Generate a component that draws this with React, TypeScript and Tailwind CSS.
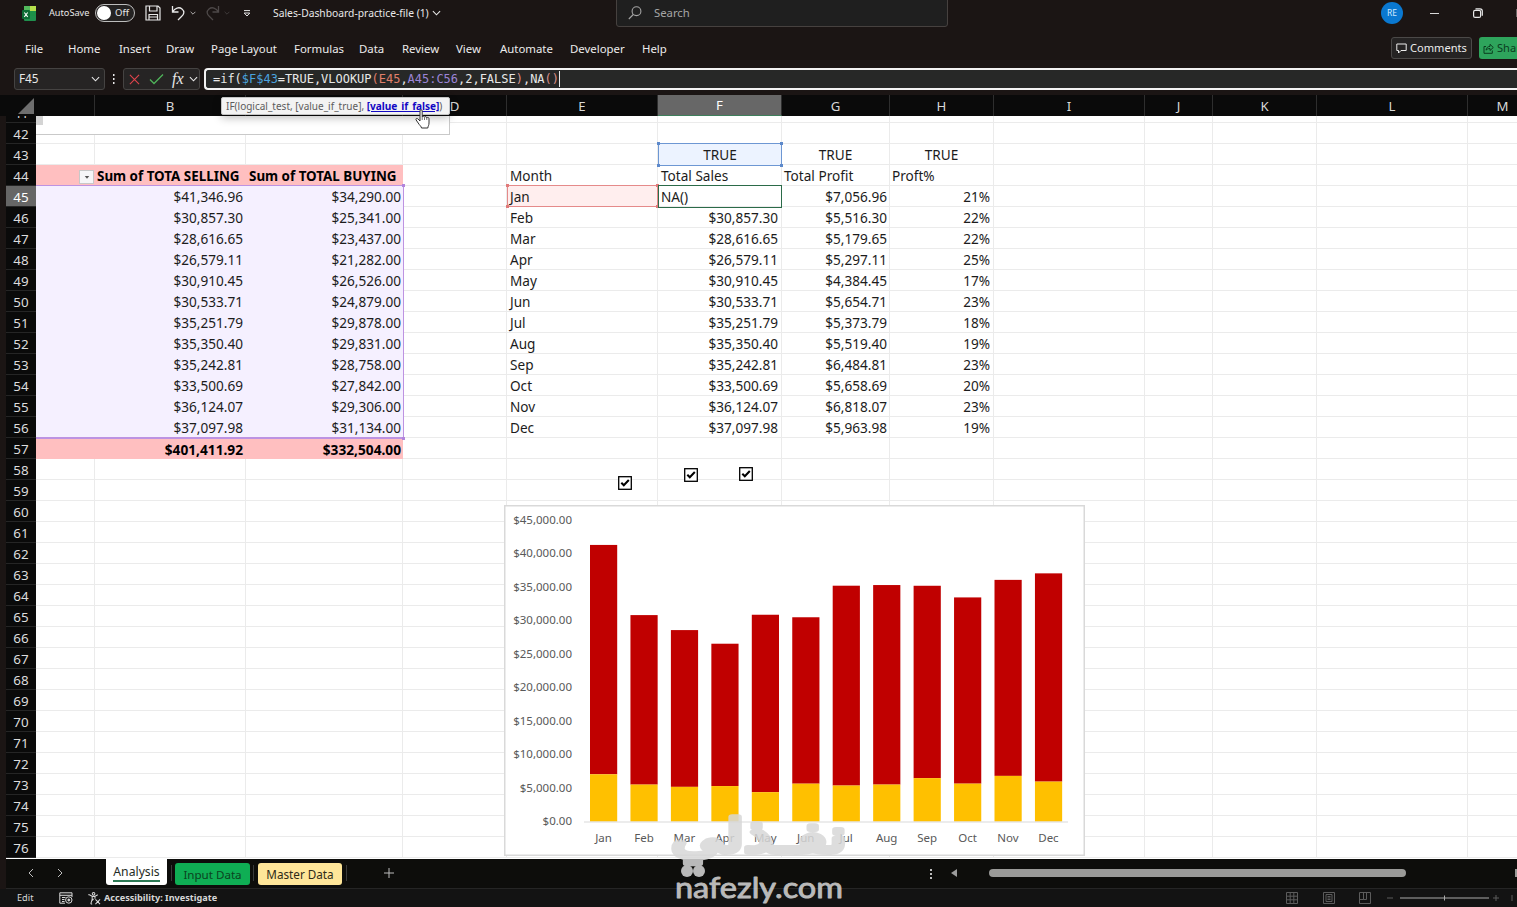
import type { ReactNode } from "react";
import clsx from "clsx";

const MENU = [
  { label: "File", width: "w-[43px]" },
  { label: "Home", width: "w-[51px]" },
  { label: "Insert", width: "w-[47px]" },
  { label: "Draw", width: "w-[45px]" },
  { label: "Page Layout", width: "w-[83px]" },
  { label: "Formulas", width: "w-[65px]" },
  { label: "Data", width: "w-[43px]" },
  { label: "Review", width: "w-[54px]" },
  { label: "View", width: "w-[44px]" },
  { label: "Automate", width: "w-[70px]" },
  { label: "Developer", width: "w-[72px]" },
  { label: "Help", width: "w-[40px]" },
];

const COLUMNS = [
  { id: "A", width: "w-[59px]" },
  { id: "B", width: "w-[151px]" },
  { id: "C", width: "w-[157px]" },
  { id: "D", width: "w-[104px]" },
  { id: "E", width: "w-[151px]" },
  { id: "F", width: "w-[124px]" },
  { id: "G", width: "w-[108px]" },
  { id: "H", width: "w-[104px]" },
  { id: "I", width: "w-[151px]" },
  { id: "J", width: "w-[68px]" },
  { id: "K", width: "w-[104px]" },
  { id: "L", width: "w-[151px]" },
  { id: "M", width: "w-[70px]" },
];

const DATA = [
  { month: "Jan", selling: 41346.96, buying: 34290, profit: 7056.96, pct: 21 },
  { month: "Feb", selling: 30857.3, buying: 25341, profit: 5516.3, pct: 22 },
  { month: "Mar", selling: 28616.65, buying: 23437, profit: 5179.65, pct: 22 },
  { month: "Apr", selling: 26579.11, buying: 21282, profit: 5297.11, pct: 25 },
  { month: "May", selling: 30910.45, buying: 26526, profit: 4384.45, pct: 17 },
  { month: "Jun", selling: 30533.71, buying: 24879, profit: 5654.71, pct: 23 },
  { month: "Jul", selling: 35251.79, buying: 29878, profit: 5373.79, pct: 18 },
  { month: "Aug", selling: 35350.4, buying: 29831, profit: 5519.4, pct: 19 },
  { month: "Sep", selling: 35242.81, buying: 28758, profit: 6484.81, pct: 23 },
  { month: "Oct", selling: 33500.69, buying: 27842, profit: 5658.69, pct: 20 },
  { month: "Nov", selling: 36124.07, buying: 29306, profit: 6818.07, pct: 23 },
  { month: "Dec", selling: 37097.98, buying: 31134, profit: 5963.98, pct: 19 },
];

const ROWS = Array.from({ length: 36 }, (_, i) => 41 + i);

const money = (n: number) =>
  "$" + n.toLocaleString("en-US", { minimumFractionDigits: 2, maximumFractionDigits: 2 });

function cellText(row: number, col: string): string {
  // F43 and E45 are drawn by the range highlights on top of the grid
  if (row === 43 && "GH".includes(col)) return "TRUE";
  if (row === 44) {
    const heads: Record<string, string> = {
      B: "Sum of TOTA SELLING",
      C: "Sum of TOTAL BUYING",
      E: "Month",
      F: "Total Sales",
      G: "Total Profit",
      H: "Proft%",
    };
    return heads[col] ?? "";
  }
  if (row >= 45 && row <= 56) {
    const d = DATA[row - 45];
    if (col === "B") return money(d.selling);
    if (col === "C") return money(d.buying);
    if (col === "E") return row === 45 ? "" : d.month;
    if (col === "F") return row === 45 ? "NA()" : money(d.selling);
    if (col === "G") return money(d.profit);
    if (col === "H") return d.pct + "%";
  }
  if (row === 57 && col === "B") return "$401,411.92";
  if (row === 57 && col === "C") return "$332,504.00";
  return "";
}

function Cell({ row, col, width }: { row: number; col: string; width: string }) {
  const pivot = "ABC".includes(col);
  const band = pivot && (row === 44 || row === 57);
  const range = pivot && row >= 45 && row <= 56;
  const left = row === 44 || col === "E" || (row === 45 && col === "F");
  return (
    <div
      className={clsx(
        "flex h-full shrink-0 items-center overflow-hidden border-r border-b whitespace-nowrap",
        width,
        band && "border-[#ffbfc0] bg-[#ffbfc0] font-bold text-black",
        band && (row === 44 ? "text-[13.4px]" : "text-[13.7px]"),
        range && "border-[#f5f0ff] bg-[#f5f0ff]",
        !band && !range && "border-[#ebebeb] bg-white",
        row === 43 ? "justify-center" : left ? "justify-start" : "justify-end",
        row !== 43 && left && (col === "E" || col === "F" || col === "C" ? "pl-[3px]" : "pl-[2px]"),
        row !== 43 && !left && (col === "C" ? "pr-px" : col === "F" || col === "H" ? "pr-[3px]" : "pr-[2px]"),
      )}
    >
      <span className={band ? "translate-y-[1.5px]" : "translate-y-px"}>{cellText(row, col)}</span>
    </div>
  );
}

function Chevron({ className }: { className?: string }) {
  return (
    <svg viewBox="0 0 10 6" className={clsx("shrink-0", className)} fill="none" stroke="currentColor" strokeWidth="1.2">
      <path d="M1 1l4 4 4-4" />
    </svg>
  );
}

function TitleBar() {
  return (
    <div className="flex h-[28px] shrink-0 items-center pb-[2px] text-[#e8e8e8]">
      <svg viewBox="0 0 14 15" className="ml-[22px] h-[15px] w-[14px] shrink-0">
        <rect x="2" y="0" width="12" height="15" rx="1" fill="#1f8f4d" />
        <rect x="2" y="0" width="6" height="5" fill="#52b95c" />
        <rect x="8" y="0" width="6" height="5" fill="#b6e04c" />
        <rect x="8" y="5" width="6" height="5" fill="#1c9048" />
        <rect x="0" y="4" width="8" height="9" rx="1" fill="#0e6b35" />
        <path d="M2.3 6.5l3.4 4.4M5.7 6.5L2.3 10.9" stroke="#fff" strokeWidth="1.1" />
      </svg>
      <span className="ml-[13px] w-[46px] shrink-0 text-[9.2px] whitespace-nowrap">AutoSave</span>
      <div className="flex h-[18px] w-[40px] shrink-0 items-center rounded-full border border-[#bdbdbd] bg-[#242222] pl-[1px]">
        <div className="h-[14px] w-[14px] shrink-0 rounded-full bg-white" />
        <span className="ml-[4px] text-[9.5px]">Off</span>
      </div>
      <svg viewBox="0 0 16 16" className="ml-[10px] h-4 w-4 shrink-0" fill="none" stroke="currentColor" strokeWidth="1.2">
        <path d="M1 1h12l2 2v12H1zM4.5 1v5H12V1M4 15V9.5h8.500V15M4 12h8.500" />
      </svg>
      <svg viewBox="0 0 14 16" className="ml-[10px] h-4 w-[14px] shrink-0" fill="none" stroke="currentColor" strokeWidth="1.3">
        <path d="M1.500 1v6h6M1.500 7C4 3 8 1.500 11 4s2 5.500-.5 7.500L7 15" />
      </svg>
      <Chevron className="ml-[5px] h-[4px] w-[6px]" />
      <svg viewBox="0 0 14 16" className="ml-[10px] h-4 w-[14px] shrink-0 text-[#4d4848]" fill="none" stroke="currentColor" strokeWidth="1.3">
        <path d="M12.500 1v6h-6M12.500 7C10 3 6 1.500 3 4s-2 5.500.5 7.500L7 15" />
      </svg>
      <Chevron className="ml-[4px] h-[4px] w-[6px] text-[#4d4848]" />
      <svg viewBox="0 0 8 7" className="ml-[13px] h-[7px] w-[8px] shrink-0" fill="none" stroke="currentColor">
        <path d="M1 .6h6M1.200 3h5.600L4 6z" />
      </svg>
      <span className="ml-[22px] w-[159px] shrink-0 text-[10.3px] whitespace-nowrap">
        Sales-Dashboard-practice-file (1)
      </span>
      <Chevron className="h-[6px] w-[9px]" />
      <div className="-mt-[4px] ml-[175px] flex h-[32px] w-[332px] shrink-0 items-center rounded-[3px] border border-[#46413f] bg-[#1f1f1f] pt-[4px] pl-[11px] text-[#a5a5a5]">
        <svg viewBox="0 0 14 14" className="h-[14px] w-[14px]" fill="none" stroke="currentColor" strokeWidth="1.1">
          <circle cx="8.500" cy="5.200" r="4.400" />
          <path d="M5.300 8.500L.8 13" />
        </svg>
        <span className="ml-[12px] text-[11.3px]">Search</span>
      </div>
      <div className="ml-[433px] flex h-[22px] w-[22px] shrink-0 items-center justify-center rounded-full bg-[#0a78d0] text-[8.5px] text-[#cfe8ff]">
        RE
      </div>
      <div className="ml-[27px] h-px w-[9px] shrink-0 bg-[#d8d8d8]" />
      <svg viewBox="0 0 10 10" className="ml-[34px] h-[10px] w-[10px] shrink-0" fill="none" stroke="currentColor" strokeWidth="1.2">
        <rect x=".6" y="2.4" width="7" height="7" rx="1.5" />
        <path d="M2.500.8H7a2.300 2.300 0 0 1 2.300 2.300v4.600" />
      </svg>
      <div className="ml-[33px] h-[8px] w-px shrink-0 bg-[#6a6666]" />
    </div>
  );
}

function MenuBar() {
  return (
    <div className="flex h-[40px] shrink-0 items-center overflow-hidden pt-px pl-[25px] text-[11.4px] text-[#ececec]">
      {MENU.map((m) => (
        <span key={m.label} className={clsx("shrink-0 whitespace-nowrap", m.width)}>
          {m.label}
        </span>
      ))}
      <div className="-mt-px ml-[709px] flex h-[22px] w-[81px] shrink-0 items-center rounded-[3px] border border-[#4b4948] bg-[#252323] pl-[4px]">
        <svg viewBox="0 0 11 11" className="h-[11px] w-[11px] shrink-0" fill="none" stroke="currentColor">
          <path d="M.8 1h9.400v6.500H5L2.500 10V7.500H.8z" />
        </svg>
        <span className="ml-[3px] text-[11.1px]">Comments</span>
      </div>
      <div className="-mt-px ml-[7px] flex h-[22px] w-[60px] shrink-0 items-center rounded-[3px] bg-[#2ea45c] pl-[4px] text-[#0b3d1f]">
        <svg viewBox="0 0 11 11" className="h-[11px] w-[11px] shrink-0" fill="none" stroke="currentColor">
          <path d="M3 3.500H1v6.800h8.300V7.500M3 7.200C3.400 4.500 5 3.400 7 3.400V1.300l3.300 3.200L7 7.500V5.500C5.300 5.500 4 6 3 7.200z" />
        </svg>
        <span className="ml-[3px] text-[11.1px]">Share</span>
      </div>
    </div>
  );
}

function FormulaBar() {
  return (
    <div className="flex h-[27px] shrink-0 items-start text-[#e8e8e8]">
      <div className="ml-[14px] flex h-[22px] w-[91px] shrink-0 items-center justify-between rounded-[3px] border border-[#454342] bg-[#262424] pr-[4px] pl-[4px] text-[11.8px]">
        F45
        <Chevron className="h-[6px] w-[9px]" />
      </div>
      <svg viewBox="0 0 4 12" className="mt-[5px] ml-[7px] h-[12px] w-[4px] shrink-0" fill="currentColor">
        <rect x="1" y="1" width="1.500" height="2" />
        <rect x="1" y="5" width="1.500" height="2" />
        <rect x="1" y="9" width="1.500" height="2" />
      </svg>
      <div className="ml-[7px] flex h-[22px] w-[77px] shrink-0 items-center rounded-[3px] border border-[#454342] bg-[#262424] pl-[5px]">
        <svg viewBox="0 0 12 12" className="h-[11px] w-[11px] shrink-0" stroke="#e0444c" strokeWidth="1.2">
          <path d="M1 1l10 10M11 1L1 11" />
        </svg>
        <svg viewBox="0 0 15 12" className="ml-[9px] h-[12px] w-[15px] shrink-0" fill="none" stroke="#4fb35a" strokeWidth="1.3">
          <path d="M1 6.500L5 10.500 14 1.500" />
        </svg>
        <span className="ml-[8px] font-['Liberation_Serif',serif] text-[16px] italic">fx</span>
        <Chevron className="ml-[5px] h-[6px] w-[9px]" />
      </div>
      <div className="ml-[4px] flex h-[22px] flex-1 items-center rounded-l-[4px] border-y-2 border-l-2 border-[#f2f2f2] bg-[#272827] pl-[7px] font-['DejaVu_Sans_Mono',monospace] text-[11.97px] whitespace-pre">
        <div className="flex translate-y-px">
          <span>=if(</span>
          <span className="text-[#4aa3df]">$F$43</span>
          <span>=TRUE,VLOOKUP</span>
          <span className="text-[#e07f6a]">(E45</span>
          <span>,</span>
          <span className="text-[#9b84d6]">A45:C56</span>
          <span>,2,FALSE</span>
          <span className="text-[#d98f88]">)</span>
          <span>,NA</span>
          <span className="text-[#d98f88]">()</span>
        </div>
        <div className="h-[16px] w-px bg-[#e8e8e8]" />
      </div>
    </div>
  );
}

function ColumnHeaders() {
  return (
    <div className="flex h-[21px] shrink-0 overflow-hidden bg-[#0a0a0a] pl-[6px] text-[13.2px] text-[#d8d8d8]">
      <div className="flex w-[30px] shrink-0 items-end justify-end pr-[2px] pb-[2px]">
        <svg viewBox="0 0 16 16" className="h-[16px] w-[16px]">
          <path d="M16 0v16H0z" fill="#6e6e6e" />
        </svg>
      </div>
      {COLUMNS.map((c) => (
        <div
          key={c.id}
          className={clsx(
            "flex shrink-0 items-center justify-center border-r border-[#2e2e2e] pt-[2px]",
            c.width,
            c.id === "F" && "border-b border-b-[#3f7f5c] bg-[#676767] text-white",
          )}
        >
          {c.id === "A" || c.id === "C" ? "" : c.id}
        </div>
      ))}
    </div>
  );
}

function Handles({ color }: { color: string }) {
  return (
    <>
      <i className={clsx("absolute -top-[2px] -left-[2px] h-[3px] w-[3px]", color)} />
      <i className={clsx("absolute -top-[2px] -right-[2px] h-[3px] w-[3px]", color)} />
      <i className={clsx("absolute -bottom-[2px] -left-[2px] h-[3px] w-[3px]", color)} />
      <i className={clsx("absolute -right-[2px] -bottom-[2px] h-[3px] w-[3px]", color)} />
    </>
  );
}

function Checkbox({ place }: { place: string }) {
  return (
    <svg viewBox="0 0 14 14" className={clsx("absolute h-[14px] w-[14px]", place)}>
      <rect x=".7" y=".7" width="12.600" height="12.600" fill="#fff" stroke="#000" strokeWidth="1.3" />
      <path d="M3.300 6.800l2.500 2.500 5-5.300" fill="none" stroke="#000" strokeWidth="2" />
    </svg>
  );
}

function Chart() {
  const base = 316.5;
  const y = (v: number) => base - (v / 45000) * 301;
  return (
    <svg
      viewBox="0 0 581 351"
      className="absolute top-[389px] left-[498px] h-[351px] w-[581px] font-['Noto_Sans',sans-serif]"
      fontSize="11.5"
      fill="#595959"
    >
      <rect x=".75" y=".75" width="579.5" height="349.5" fill="#fff" stroke="#d9d9d9" strokeWidth="1.5" />
      {Array.from({ length: 10 }, (_, i) => (
        <text key={i} x="68" y={y(i * 5000) + 3.5} textAnchor="end">
          {money(i * 5000)}
        </text>
      ))}
      {DATA.map((d, i) => {
        const x = 86 + i * 40.45;
        return (
          <g key={d.month}>
            <rect x={x} y={y(d.selling)} width="27.2" height={y(d.profit) - y(d.selling)} fill="#c00000" />
            <rect x={x} y={y(d.profit)} width="27.2" height={base - y(d.profit)} fill="#ffc000" />
            <text x={x + 13.5} y="337" textAnchor="middle">
              {d.month}
            </text>
          </g>
        );
      })}
      <path d="M80 317h484" stroke="#d9d9d9" strokeWidth="1.2" />
    </svg>
  );
}

function FunctionHint() {
  return (
    <>
      <div className="absolute top-0 left-[30px] h-[19px] w-[414px] border-r border-b border-[#c9c9c9] bg-white">
        <div className="h-[9px] w-[7px] bg-[#d4d4d4]" />
      </div>
      <div className="absolute -top-[19px] left-[215px] flex h-[18px] w-[229px] items-center rounded-[2px] border border-[#c4c4c4] bg-[#f3f3f3] pl-[4px] text-[10px] whitespace-nowrap text-[#5c5c5c] shadow-[0_3px_8px_rgba(0,0,0,0.25)]">
        IF(logical_test, [value_if_true],&nbsp;
        <b className="text-[10.1px] tracking-[-0.05px] text-[#1208c4] underline">[value_if_false]</b>)
      </div>
      <svg viewBox="0 0 16 20" className="absolute -top-[7px] left-[409px] h-[20px] w-[16px]" fill="#fff" stroke="#333" strokeLinejoin="round">
        <path d="M5 1.800c0-1.400 2-1.400 2.200 0V8c.3-1.200 2.300-1 2.300.3.400-1 2.200-.8 2.300.6.600-.9 2.200-.5 2.200.8v4.300c0 2.500-1 3-1.200 5H6.500c0-1.500-2-2.700-3.300-5L1 10.800c-.5-1.300 1-1.900 1.800-1L5 12z" />
        <path d="M7.200 8v3M9.500 8.500V11M11.800 9v2" strokeWidth=".7" />
      </svg>
    </>
  );
}

function Sheet() {
  return (
    <div className="relative ml-[6px] flex h-[743px] shrink-0 flex-col bg-white text-[13.6px] text-[#1c1c1c]">
      {ROWS.map((r) => (
        <div key={r} className={clsx("flex shrink-0 overflow-hidden", r === 41 ? "h-[7px] items-end" : "h-[21px]")}>
          <div
            className={clsx(
              "flex h-[21px] w-[30px] shrink-0 items-center justify-center border-b border-[#252525] pt-[3px] text-[13.4px]",
              r === 45 ? "bg-[#666] text-white" : "bg-[#0a0a0a] text-[#dcdcdc]",
            )}
          >
            {r}
          </div>
          {COLUMNS.map((c) => (
            <Cell key={c.id} row={r} col={c.id} width={c.width} />
          ))}
        </div>
      ))}

      <div className="absolute top-[69px] left-[30px] h-[254px] w-[368px] border-t border-r border-b-2 border-[#bd93e2]">
        <i className="absolute -top-[2px] -right-[2px] h-[3px] w-[3px] bg-[#b184dc]" />
        <i className="absolute -right-[2px] -bottom-[3px] h-[3px] w-[3px] bg-[#b184dc]" />
      </div>
      <div className="absolute top-[54px] left-[73px] flex h-[14px] w-[15px] items-center justify-center border border-[#c8c8c8] bg-[#f6f6f8]">
        <svg viewBox="0 0 6 4" className="h-[3px] w-[6px]">
          <path d="M0 0h6L3 3.500z" fill="#555" />
        </svg>
      </div>
      <div className="absolute top-[27px] left-[652px] flex h-[23px] w-[124px] items-center justify-center border border-[#6d97d3] bg-[#ecf3ff]">
        <span>TRUE</span>
        <Handles color="bg-[#5d89cb]" />
      </div>
      <div className="absolute top-[69px] left-[501px] flex h-[22px] w-[151px] items-center border border-[#e58a8a] bg-[#ffeeee] pl-[2px]">
        <span className="translate-y-px">Jan</span>
        <Handles color="bg-[#e07a7a]" />
      </div>
      <div className="absolute top-[69px] left-[652px] h-[23px] w-[124px] border border-[#2b6b49]" />

      <Checkbox place="top-[360px] left-[612px]" />
      <Checkbox place="top-[352px] left-[678px]" />
      <Checkbox place="top-[351px] left-[733px]" />
      <Chart />
      <FunctionHint />
    </div>
  );
}

function Divider() {
  return <div className="mt-[6px] h-[16px] w-px shrink-0 bg-[#3a3a3a]" />;
}

function SheetTabs() {
  return (
    <div className="ml-[6px] flex h-[30px] shrink-0 items-start overflow-hidden border-b border-[#252525] bg-[#0d0d0b] text-[12.4px] text-[#bdbdbd]">
      <svg viewBox="0 0 6 10" className="mt-[9px] ml-[22px] h-[10px] w-[6px] shrink-0" fill="none" stroke="currentColor">
        <path d="M5 1L1 5l4 4" />
      </svg>
      <svg viewBox="0 0 6 10" className="mt-[9px] ml-[23px] h-[10px] w-[6px] shrink-0" fill="none" stroke="currentColor">
        <path d="M1 1l4 4-4 4" />
      </svg>
      <div className="ml-[43px] flex h-[26px] w-[61px] shrink-0 justify-center rounded-b-[3px] bg-white text-[#1f2b25]">
        <span className="mt-[3px] h-[20px] border-b-2 border-[#2d7a55] text-[12.2px] leading-[20px]">Analysis</span>
      </div>
      <div className="w-[4px] shrink-0" />
      <Divider />
      <div className="mt-[4px] ml-[3px] flex h-[22px] w-[75px] shrink-0 items-center justify-center rounded-[3px] bg-[#0fae54] pt-[2px] text-[11.6px] text-[#0b4320]">
        Input Data
      </div>
      <div className="w-[3px] shrink-0" />
      <Divider />
      <div className="mt-[4px] ml-[4px] flex h-[22px] w-[84px] shrink-0 items-center justify-center rounded-[3px] bg-[#ffe699] pt-[2px] text-[11.7px] text-[#2e2a18]">
        Master Data
      </div>
      <div className="w-[4px] shrink-0" />
      <Divider />
      <svg viewBox="0 0 10 10" className="mt-[9px] ml-[37px] h-[10px] w-[10px] shrink-0" stroke="currentColor">
        <path d="M5 0v10M0 5h10" />
      </svg>
      <svg viewBox="0 0 3 10" className="mt-[10px] ml-[536px] h-[10px] w-[3px] shrink-0" fill="currentColor">
        <rect y="0" width="2" height="2" />
        <rect y="4" width="2" height="2" />
        <rect y="8" width="2" height="2" />
      </svg>
      <svg viewBox="0 0 6 8" className="mt-[10px] ml-[18px] h-[8px] w-[6px] shrink-0" fill="#9c9c9c">
        <path d="M6 0v8L0 4z" />
      </svg>
      <div className="mt-[10px] ml-[32px] h-[8px] w-[417px] shrink-0 rounded-full bg-[#9a9a98]" />
      <div className="mt-[10px] ml-[109px] h-[8px] w-[4px] shrink-0 bg-[#9a9a98]" />
    </div>
  );
}

function StatusBar() {
  return (
    <div className="flex h-[18px] shrink-0 items-center overflow-hidden bg-[#131313] text-[#d8d8d8]">
      <span className="ml-[17px] w-[42px] text-[9.2px]">Edit</span>
      <svg viewBox="0 0 14 12" className="h-[12px] w-[14px]" fill="none" stroke="currentColor">
        <path d="M13 5V.8H.8v10.400H6M.8 3.300H13M3 5.500h3.500M3 7.500h2.500M3 9.500h2.500" />
        <circle cx="9.800" cy="8" r="3.200" />
        <circle cx="9.800" cy="8" r="1" fill="currentColor" />
      </svg>
      <svg viewBox="0 0 14 14" className="ml-[15px] h-[13px] w-[13px]" fill="none" stroke="currentColor" strokeWidth="1.1">
        <circle cx="6" cy="2" r="1.400" />
        <path d="M1.500 3l3 1.700v3L3 12.800M10.500 3l-3 1.700v2.500M4.500 4.700h3M4.600 9L6 7.500M8 8l5 5M13 8l-5 5M1 3.500L.8 2.300M3 13l1.500-.2" />
      </svg>
      <span className="ml-[3px] text-[9.15px] font-bold whitespace-nowrap">Accessibility: Investigate</span>
      <div className="ml-auto flex items-center text-[#5c5c5c]">
        <svg viewBox="0 0 12 12" className="h-[12px] w-[12px]" fill="none" stroke="currentColor">
          <path d="M.5.5h11v11H.5zM4.200.5v11M7.800.5v11M.5 4.200h11M.5 7.800h11" />
        </svg>
        <svg viewBox="0 0 12 12" className="ml-[25px] h-[12px] w-[12px]" fill="none" stroke="currentColor">
          <path d="M.5.5h11v11H.5zM3 2.500h6v7H3zM4.500 4.500h3M4.500 6h3M4.500 7.500h3" />
        </svg>
        <svg viewBox="0 0 12 12" className="ml-[24px] h-[12px] w-[12px]" fill="none" stroke="currentColor">
          <path d="M.5.5h11v11H.5zM4.500.5v7h-4M7.500.5v7h-3" />
        </svg>
        <svg viewBox="0 0 130 10" className="ml-[16px] h-[10px] w-[130px]" stroke="currentColor">
          <path d="M0 5h6M106 5h6M109 2v6M125 2v6" />
          <path d="M13 5h89M57.500 2.500v5" stroke="#aaa" />
        </svg>
      </div>
    </div>
  );
}

function Watermark() {
  return (
    <svg
      viewBox="0 0 190 100"
      className="pointer-events-none absolute top-[807px] left-[664px] h-[100px] w-[190px]"
      fill="#d8d8d8"
      stroke="#d8d8d8"
      strokeLinejoin="round"
      opacity=".85"
    >
      <text
        x="95"
        y="45"
        direction="rtl"
        textAnchor="middle"
        textLength="176"
        lengthAdjust="spacingAndGlyphs"
        fontSize="46"
        strokeWidth="5.5"
        fontFamily="DejaVu Sans"
      >
        نفـذلي
      </text>
      <circle cx="23" cy="64" r="6" stroke="none" />
      <circle cx="35" cy="64" r="6" stroke="none" />
      <text
        x="11"
        y="90.5"
        textLength="168"
        lengthAdjust="spacingAndGlyphs"
        fontSize="29"
        strokeWidth="0.9"
        fontFamily="Lato"
      >
        nafezly.com
      </text>
    </svg>
  );
}

function Window({ children }: { children: ReactNode }) {
  return (
    <div className="relative flex h-[907px] w-[1517px] flex-col overflow-hidden bg-[#1b1514] font-['Noto_Sans','Open_Sans',sans-serif] leading-none">
      {children}
    </div>
  );
}

export default function App() {
  return (
    <Window>
      <TitleBar />
      <MenuBar />
      <FormulaBar />
      <ColumnHeaders />
      <Sheet />
      <SheetTabs />
      <StatusBar />
      <Watermark />
    </Window>
  );
}
